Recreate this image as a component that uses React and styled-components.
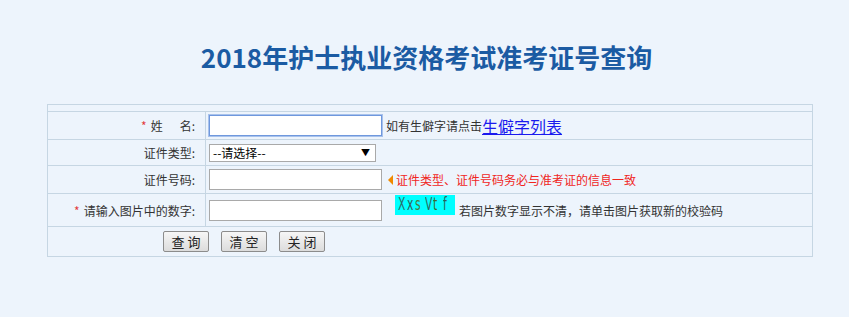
import React from "react";
import styled, { createGlobalStyle } from "styled-components";

const GlobalStyle = createGlobalStyle`
  body {
    margin: 0;
    background: #edf4fc;
    font-family: "Noto Sans CJK SC", "Liberation Sans", sans-serif;
    font-size: 12px;
    color: #333;
  }
`;

const Page = styled.div`
  width: 849px;
  height: 317px;
  padding-top: 38px;
  box-sizing: border-box;
`;

const Title = styled.h1`
  margin: 0 0 28px;
  text-align: center;
  font-size: 26px;
  line-height: 38px;
  font-weight: bold;
  color: #1b5ba3;
  padding-left: 4px;
`;

const Table = styled.table`
  margin-left: 47px;
  width: 766px;
  border-collapse: collapse;
  border: 1px solid #c6d6e3;
`;

const Row = styled.tr`
  height: ${(p) => p.$h}px;
`;

const Label = styled.td`
  width: 147px;
  padding: 0 10px 0 0;
  text-align: right;
  border: 1px solid #c6d6e3;
  white-space: nowrap;
`;

const Field = styled.td`
  padding: 0 0 0 3px;
  border: 1px solid #c6d6e3;
  white-space: nowrap;
`;

const Blank = styled.td`
  padding: 0;
  border: 1px solid #c6d6e3;
`;

const Star = styled.span`
  color: #e23c3c;
  margin-right: 4px;
`;

const Spacer = styled.span`
  display: inline-block;
  width: 17px;
`;

const Line = styled.div`
  display: flex;
  align-items: center;
`;

const Input = styled.input`
  width: 173px;
  height: 21px;
  box-sizing: border-box;
  border: 1px solid ${(p) => (p.$focus ? "#6f98dd" : "#a9a9a9")};
  box-shadow: ${(p) => (p.$focus ? "0 0 0 1px #a8c2ec" : "none")};
  background: #fff;
  margin: 0;
  padding: 0 3px;
  outline: none;
`;

const Select = styled.div`
  width: 167px;
  height: 18px;
  box-sizing: border-box;
  border: 1px solid #a9a9a9;
  background: #fff;
  display: flex;
  align-items: center;
  justify-content: space-between;
  padding: 0 5px 0 3px;
  font-size: 12px;
  color: #000;
`;

const Arrow = styled.span`
  font-size: 9px;
  color: #000;
`;

const Note = styled.span`
  margin-left: ${(p) => p.$gap ?? 4}px;
  color: ${(p) => p.$color || "#333"};
`;

const Link = styled.a`
  font-size: 16px;
  color: #1a1aee;
  text-decoration: underline;
`;

const Triangle = styled.span`
  display: inline-block;
  width: 0;
  height: 0;
  margin: 0 3px 0 6px;
  border-top: 5px solid transparent;
  border-bottom: 5px solid transparent;
  border-right: 5px solid #f08a00;
`;

const Captcha = styled.span`
  display: inline-flex;
  align-items: center;
  width: 60px;
  height: 20px;
  margin: -10px 0 0 13px;
  padding: 0 0 2px 3px;
  box-sizing: border-box;
  background: #00ffff;
  font-family: "DejaVu Sans Condensed", "Liberation Sans Narrow", sans-serif;
  font-size: 17px;
  line-height: 18px;
`;

const Ch = styled.span`
  color: ${(p) => p.$c};
  margin-right: ${(p) => p.$m}px;
  display: inline-block;
  width: ${(p) => p.$w}px;
  transform: scaleX(0.7);
  transform-origin: left center;
`;

const Buttons = styled.div`
  display: flex;
  gap: 12px;
  padding-left: 115px;
`;

const Button = styled.button`
  width: 46px;
  height: 21px;
  padding: 0;
  border: 1px solid #8c8c8c;
  border-radius: 2px;
  background: linear-gradient(#f6f6f6, #dcdcdc);
  font-family: "Noto Sans CJK SC", sans-serif;
  font-size: 13px;
  color: #222;
  letter-spacing: 3px;
  text-indent: 3px;
`;

export default function App() {
  const code = [
    ["X", "#2a6f6a", 1, 8],
    ["x", "#33605a", 1, 7],
    ["s", "#4a7a3a", 4, 6],
    ["V", "#2e6a62", 0, 8],
    ["t", "#3c6a30", 5, 5],
    ["f", "#2a5e58", 0, 5],
  ];
  return (
    <Page>
      <GlobalStyle />
      <Title>2018年护士执业资格考试准考证号查询</Title>
      <Table>
        <tbody>
          <Row $h={7}>
            <Blank colSpan={2} />
          </Row>
          <Row $h={28}>
            <Label>
              <Star>*</Star>姓<Spacer />名:
            </Label>
            <Field>
              <Line>
                <Input $focus defaultValue="" />
                <Note>如有生僻字请点击</Note>
                <Link href="#">生僻字列表</Link>
              </Line>
            </Field>
          </Row>
          <Row $h={26}>
            <Label>证件类型:</Label>
            <Field>
              <Select>
                <span>--请选择--</span>
                <Arrow>▼</Arrow>
              </Select>
            </Field>
          </Row>
          <Row $h={28}>
            <Label>证件号码:</Label>
            <Field>
              <Line>
                <Input />
                <Triangle />
                <Note $gap={0} $color="#f0261e">证件类型、证件号码务必与准考证的信息一致</Note>
              </Line>
            </Field>
          </Row>
          <Row $h={33}>
            <Label>
              <Star>*</Star>请输入图片中的数字:
            </Label>
            <Field>
              <Line>
                <Input />
                <Captcha>
                  {code.map(([c, col, m, w], i) => (
                    <Ch key={i} $c={col} $m={m} $w={w}>
                      {c}
                    </Ch>
                  ))}
                </Captcha>
                <Note $gap={4}>若图片数字显示不清，请单击图片获取新的校验码</Note>
              </Line>
            </Field>
          </Row>
          <Row $h={30}>
            <Blank colSpan={2}>
              <Buttons>
                <Button>查询</Button>
                <Button>清空</Button>
                <Button>关闭</Button>
              </Buttons>
            </Blank>
          </Row>
        </tbody>
      </Table>
    </Page>
  );
}
